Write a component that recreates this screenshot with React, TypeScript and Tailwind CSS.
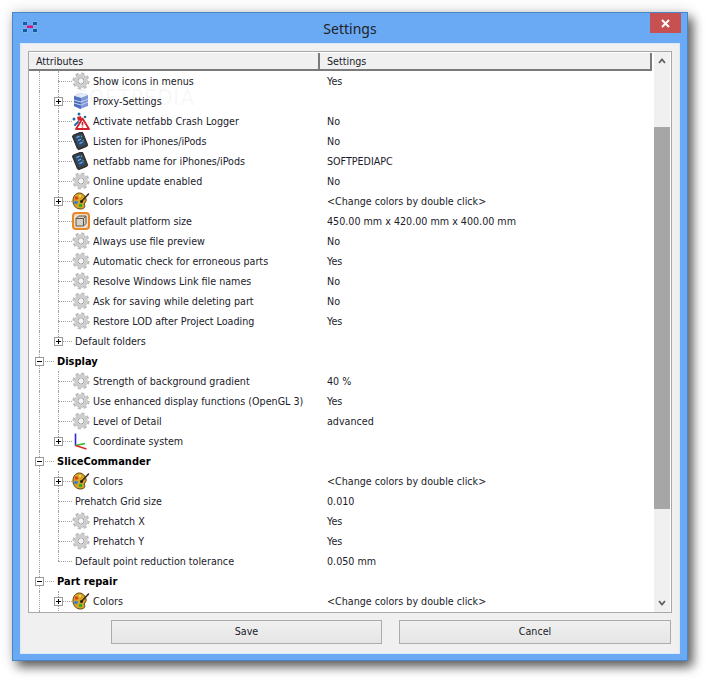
import React from 'react';

type IconName = 'gear' | 'proxy' | 'crash' | 'phone' | 'palette' | 'cube' | 'axes';

type Row =
    | { kind: 'head'; label: string }
    | { kind: 'item'; label: string; value?: string; icon?: IconName; expand?: boolean; last?: boolean };

const COLORS = '<Change colors by double click>';

const rows: Row[] = [
    { kind: 'item', label: 'Show icons in menus', value: 'Yes', icon: 'gear' },
    { kind: 'item', label: 'Proxy-Settings', icon: 'proxy', expand: true },
    { kind: 'item', label: 'Activate netfabb Crash Logger', value: 'No', icon: 'crash' },
    { kind: 'item', label: 'Listen for iPhones/iPods', value: 'No', icon: 'phone' },
    { kind: 'item', label: 'netfabb name for iPhones/iPods', value: 'SOFTPEDIAPC', icon: 'phone' },
    { kind: 'item', label: 'Online update enabled', value: 'No', icon: 'gear' },
    { kind: 'item', label: 'Colors', value: COLORS, icon: 'palette', expand: true },
    { kind: 'item', label: 'default platform size', value: '450.00 mm x 420.00 mm x 400.00 mm', icon: 'cube' },
    { kind: 'item', label: 'Always use file preview', value: 'No', icon: 'gear' },
    { kind: 'item', label: 'Automatic check for erroneous parts', value: 'Yes', icon: 'gear' },
    { kind: 'item', label: 'Resolve Windows Link file names', value: 'No', icon: 'gear' },
    { kind: 'item', label: 'Ask for saving while deleting part', value: 'No', icon: 'gear' },
    { kind: 'item', label: 'Restore LOD after Project Loading', value: 'Yes', icon: 'gear' },
    { kind: 'item', label: 'Default folders', expand: true, last: true },
    { kind: 'head', label: 'Display' },
    { kind: 'item', label: 'Strength of background gradient', value: '40 %', icon: 'gear' },
    { kind: 'item', label: 'Use enhanced display functions (OpenGL 3)', value: 'Yes', icon: 'gear' },
    { kind: 'item', label: 'Level of Detail', value: 'advanced', icon: 'gear' },
    { kind: 'item', label: 'Coordinate system', icon: 'axes', expand: true, last: true },
    { kind: 'head', label: 'SliceCommander' },
    { kind: 'item', label: 'Colors', value: COLORS, icon: 'palette', expand: true },
    { kind: 'item', label: 'Prehatch Grid size', value: '0.010' },
    { kind: 'item', label: 'Prehatch X', value: 'Yes', icon: 'gear' },
    { kind: 'item', label: 'Prehatch Y', value: 'Yes', icon: 'gear' },
    { kind: 'item', label: 'Default point reduction tolerance', value: '0.050 mm', last: true },
    { kind: 'head', label: 'Part repair' },
    { kind: 'item', label: 'Colors', value: COLORS, icon: 'palette', expand: true },
];

function TreeIcon({ name }: { name: IconName }) {
    if (name === 'gear') {
        return (
            <svg width="18" height="18" viewBox="0 0 18 18">
                <circle cx="9" cy="9" r="6.8" fill="none" stroke="#bcbcbc" strokeWidth="3.6" strokeDasharray="2.9 2.44" />
                <circle cx="9" cy="9" r="5.2" fill="none" stroke="#cdcdcd" strokeWidth="3.4" />
                <circle cx="9" cy="9" r="3" fill="none" stroke="#9a9a9a" strokeWidth="1" />
                <circle cx="9" cy="9" r="2.4" fill="#f6f6f6" />
            </svg>
        );
    }
    if (name === 'proxy') {
        return (
            <svg width="18" height="18" viewBox="0 0 18 18">
                <path d="M2 4 L8 1 L16 3 V14 L8 17 L2 14 Z" fill="#7f98d8" />
                <path d="M2 4 L8 1 L16 3 L9 6 Z" fill="#e6ecfa" />
                <path d="M2 4 L9 6 V17 L2 14 Z" fill="#4f6fbe" />
                <path d="M2 8 L9 10 L16 7 M2 11 L9 13 L16 10" stroke="#c9d6f2" strokeWidth="1" fill="none" />
            </svg>
        );
    }
    if (name === 'crash') {
        return (
            <svg width="18" height="18" viewBox="0 0 18 18">
                <circle cx="7" cy="2" r="1.5" fill="#1f6aa8" />
                <circle cx="2" cy="7" r="1.5" fill="#1f6aa8" />
                <circle cx="13" cy="5" r="1.3" fill="#1f6aa8" />
                <path d="M3 13 L6 10" stroke="#1f6aa8" strokeWidth="2" strokeLinecap="round" />
                <path d="M5 5 L9 4 L10 8 L6 9 Z" fill="#d0202a" />
                <path d="M10.5 6.5 L17 17 H4 Z" fill="#fff" stroke="#d4202a" strokeWidth="1.8" strokeLinejoin="round" />
                <path d="M10.5 10 V13.5 M10.5 14.5 V15.5" stroke="#d4202a" strokeWidth="1.6" />
            </svg>
        );
    }
    if (name === 'phone') {
        return (
            <svg width="18" height="18" viewBox="0 0 18 18">
                <rect x="2.5" y="1" width="11" height="15.5" rx="1.5" fill="#3c3c3c" stroke="#1c1c1c" strokeWidth="0.8" transform="rotate(-22 8 8.5)" />
                <rect x="4.5" y="3" width="7" height="11" fill="#2c4f78" transform="rotate(-22 8 8.5)" />
                <path d="M4.5 5.5 L7.5 4.3 M6 8.5 L9 7.3 M7.5 11.5 L10.5 10.3" stroke="#7fb4e6" strokeWidth="1.2" />
                <path d="M9 4.5 L10 4.1 M10.5 9 L11.5 8.6" stroke="#7ac47a" strokeWidth="1.2" />
            </svg>
        );
    }
    if (name === 'palette') {
        return (
            <svg width="18" height="18" viewBox="0 0 18 18">
                <path d="M7.5 1 C3 1 0.8 5 1 9.5 C1.2 14 4.5 17 8.5 17 C12 17 13.5 15 12.5 13 C11.8 11.5 13 10.5 14 9.5 C15 7 12 1 7.5 1 Z" fill="#d9a420" stroke="#5e4308" strokeWidth="1" />
                <circle cx="4.5" cy="6" r="1.7" fill="#e23b2a" />
                <circle cx="4" cy="10.5" r="1.8" fill="#2f80e0" />
                <circle cx="8.5" cy="13.5" r="1.8" fill="#2fa838" />
                <circle cx="8" cy="4" r="1.2" fill="#f3d769" />
                <path d="M9.5 9.5 L16.5 2" stroke="#3a2a10" strokeWidth="1.6" strokeLinecap="round" />
                <circle cx="9.5" cy="9.5" r="1.5" fill="#222" />
            </svg>
        );
    }
    if (name === 'cube') {
        return (
            <svg width="18" height="18" viewBox="0 0 18 18">
                <rect x="1" y="1" width="16" height="16" rx="3" fill="#f1dcc6" stroke="#e8862a" strokeWidth="2" />
                <path d="M4 6.5 L6.5 4 H14 V11.5 L11.5 14 H4 Z" fill="#d6d1c8" stroke="#5f574c" strokeWidth="1" />
                <path d="M4 6.5 H11.5 V14 M11.5 6.5 L14 4" fill="none" stroke="#5f574c" strokeWidth="1" />
            </svg>
        );
    }
    return (
        <svg width="18" height="18" viewBox="0 0 18 18">
            <path d="M3.5 13.5 V1.5" stroke="#2a2ae0" strokeWidth="1.6" />
            <path d="M3.5 13.5 L13 11.5" stroke="#28b828" strokeWidth="1.4" />
            <path d="M3.5 13.5 L14.5 17" stroke="#e02828" strokeWidth="1.4" />
        </svg>
    );
}

function Expander({ open, className }: { open?: boolean; className: string }) {
    return (
        <div className={`absolute w-[9px] h-[9px] border border-[#9a9a9a] bg-white flex items-center justify-center ${className}`}>
            <div className="relative w-[5px] h-[5px]">
                <div className="absolute left-0 top-[2px] w-[5px] h-px bg-black" />
                {!open && <div className="absolute left-[2px] top-0 w-px h-[5px] bg-black" />}
            </div>
        </div>
    );
}

function TreeRow({ row }: { row: Row }) {
    if (row.kind === 'head') {
        return (
            <div className="flex h-5 items-stretch">
                <div className="relative ml-[10px] w-[18px] border-l border-dotted border-[#a0a0a0]">
                    <div className="absolute left-0 top-1/2 w-[14px] border-t border-dotted border-[#a0a0a0]" />
                    <Expander open className="left-[-5px] top-[6px]" />
                </div>
                <span className="font-bold text-[11px] text-black leading-[22px]">{row.label}</span>
            </div>
        );
    }
    return (
        <div className="flex h-5 items-stretch">
            <div className="flex w-[291px] shrink-0">
                <div className="ml-[10px] w-[19px] border-l border-dotted border-[#a0a0a0]" />
                <div className={`relative ${row.icon ? 'w-[14px]' : 'w-[17px]'}`}>
                    <div className={`border-l border-dotted border-[#a0a0a0] ${row.last ? 'h-1/2' : 'h-full'}`} />
                    <div className={`absolute left-0 top-1/2 border-t border-dotted border-[#a0a0a0] ${row.icon ? 'w-full' : 'w-[14px]'}`} />
                    {row.expand && <Expander className="left-[-4px] top-[6px]" />}
                </div>
                {row.icon && (
                    <div className="w-[21px] pt-px">
                        <TreeIcon name={row.icon} />
                    </div>
                )}
                <span className="leading-[22px] whitespace-nowrap">{row.label}</span>
            </div>
            {row.value && <span className="pl-[7px] leading-[22px] whitespace-nowrap">{row.value}</span>}
        </div>
    );
}

function Scrollbar() {
    return (
        <div className="w-[16px] ml-[2px] mr-px shrink-0 flex flex-col bg-[#f0f0f0]">
            <div className="h-[18px] flex items-center justify-center">
                <svg width="8" height="6" viewBox="0 0 8 6">
                    <path d="M1 5 L4 1.5 L7 5" fill="none" stroke="#606060" strokeWidth="1.8" />
                </svg>
            </div>
            <div className="h-[57px]" />
            <div className="h-[382px] bg-[#a6a6a6]" />
            <div className="flex-1" />
            <div className="h-[18px] flex items-center justify-center">
                <svg width="8" height="6" viewBox="0 0 8 6">
                    <path d="M1 1 L4 4.5 L7 1" fill="none" stroke="#606060" strokeWidth="1.8" />
                </svg>
            </div>
        </div>
    );
}

export default function App() {
    return (
        <div className="min-h-screen bg-white p-3" style={{ fontFamily: '"DejaVu Sans Condensed", "DejaVu Sans", sans-serif' }}>
            <div className="w-[676px] h-[649px] flex flex-col bg-[#6aaaf5] border border-[#4a86c5] shadow-[5px_6px_10px_rgba(0,0,0,0.6),0_0_14px_rgba(0,0,0,0.15)]">
                <div className="relative h-[30px] shrink-0 flex items-center justify-center">
                    <svg className="absolute left-[9px] top-[8px]" width="16" height="12" viewBox="0 0 16 12">
                        <rect x="0.5" y="0.5" width="5" height="4" rx="1" fill="#0f5fae" stroke="#cfe3fa" strokeWidth="0.5" />
                        <rect x="10.5" y="0.5" width="5" height="4" rx="1" fill="#0f5fae" stroke="#cfe3fa" strokeWidth="0.5" />
                        <rect x="5" y="4.5" width="6" height="2.5" fill="#e0107a" />
                        <rect x="0.5" y="7.5" width="5" height="4" rx="1" fill="#0f5fae" stroke="#cfe3fa" strokeWidth="0.5" />
                        <rect x="10.5" y="7.5" width="5" height="4" rx="1" fill="#0f5fae" stroke="#cfe3fa" strokeWidth="0.5" />
                    </svg>
                    <span className="text-[14px] text-[#222]" style={{ fontFamily: '"Noto Sans", sans-serif' }}>Settings</span>
                    <div className="absolute right-[6px] top-0 w-[31px] h-[20px] bg-[#c75050] flex items-center justify-center">
                        <svg width="9" height="9" viewBox="0 0 9 9">
                            <path d="M1 1 L8 8 M8 1 L1 8" stroke="#fff" strokeWidth="2" />
                        </svg>
                    </div>
                </div>
                <div className="mx-[7px] mb-[7px] flex-1 flex flex-col bg-[#f0f0f0] border border-[#dce9f7] px-[7px] pt-[7px] pb-[9px] text-[10.65px] text-[#1a1a2a]">
                    <div className="h-[562px] flex border border-[#a8a8a8] bg-white">
                        <div className="flex-1 flex flex-col min-w-0">
                            <div className="h-[19px] shrink-0 flex bg-[#f0f0f0] border-t border-white border-b-2 border-b-[#7a7a7a]">
                                <div className="w-[291px] pl-[7px] border-r-2 border-[#7a7a7a] leading-[18px]">Attributes</div>
                                <div className="flex-1 pl-[7px] border-r-2 border-[#7a7a7a] leading-[18px]">Settings</div>
                            </div>
                            <div className="relative flex-1 overflow-hidden">
                                {rows.map((row, i) => (
                                    <TreeRow key={i} row={row} />
                                ))}
                                <div className="h-5 ml-[10px] border-l border-dotted border-[#a0a0a0]" />
                                <span className="absolute left-[46px] top-[16px] text-[22px] leading-none tracking-wider text-black/5">SOFTPEDIA</span>
                            </div>
                        </div>
                        <Scrollbar />
                    </div>
                    <div className="mt-[7px] mr-px flex justify-end gap-[17px]">
                        <button className="w-[271px] h-[24px] border border-[#acacac] bg-gradient-to-b from-[#f0f0f0] to-[#e5e5e5]">Save</button>
                        <button className="w-[272px] h-[24px] border border-[#acacac] bg-gradient-to-b from-[#f0f0f0] to-[#e5e5e5]">Cancel</button>
                    </div>
                </div>
            </div>
        </div>
    );
}
